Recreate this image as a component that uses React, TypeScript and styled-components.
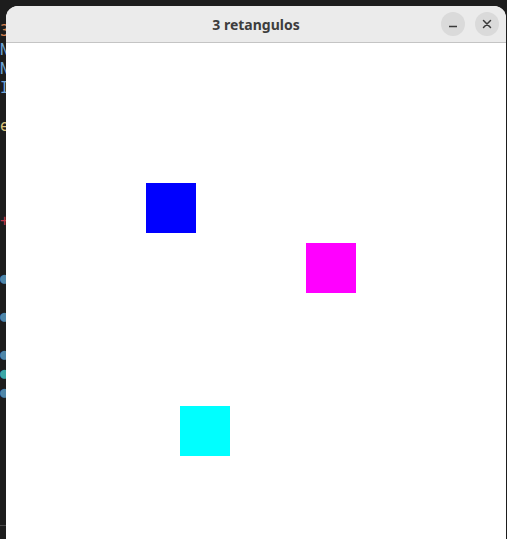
import React from "react";
import styled, { createGlobalStyle } from "styled-components";

const Global = createGlobalStyle`
  html, body { margin: 0; padding: 0; background: #1d1d1d; overflow: hidden; }
  #root { width: 507px; height: 539px; }
`;

const Desktop = styled.div`
  display: flex;
  width: 507px;
  height: 539px;
  background: #1d1d1d;
`;

const Terminal = styled.div`
  width: 6px;
  flex: none;
  overflow: hidden;
  display: flex;
  flex-direction: column;
  padding-top: 22px;
  font-family: "DejaVu Sans Mono", monospace;
  font-size: 15px;
  line-height: 19px;
  position: relative;
`;

const TermLine = styled.div<{ $color: string }>`
  height: 19px;
  display: flex;
  justify-content: flex-end;
  white-space: pre;
  color: ${(p) => p.$color};
  margin-right: -3px;
`;

const TermRule = styled.div`
  margin-top: auto;
  margin-bottom: 13px;
  height: 1px;
  background: #4a4a4a;
`;

const Window = styled.div`
  margin-top: 6px;
  width: 500px;
  flex: none;
  display: flex;
  flex-direction: column;
  background: #ffffff;
  border-radius: 12px 12px 0 0;
  overflow: hidden;
`;

const TitleBar = styled.div`
  height: 36px;
  flex: none;
  background: #ebebeb;
  border-bottom: 1px solid #c4c4c4;
  display: grid;
  grid-template-columns: 1fr auto 1fr;
  align-items: center;
`;

const Title = styled.div`
  grid-column: 2;
  font-family: "Noto Sans", "DejaVu Sans", sans-serif;
  font-weight: 700;
  font-size: 14px;
  color: #3d3d3d;
  padding-top: 1px;
`;

const Controls = styled.div`
  grid-column: 3;
  justify-self: end;
  display: flex;
  gap: 10px;
  padding-right: 7px;
`;

const CtrlButton = styled.div`
  width: 24px;
  height: 24px;
  border-radius: 50%;
  background: #dadada;
  display: flex;
  align-items: center;
  justify-content: center;
  color: #3a3a3a;
`;

const Canvas = styled.div`
  flex: 1;
  position: relative;
  background: #ffffff;
`;

const Rect = styled.div<{ $x: number; $y: number; $color: string }>`
  position: absolute;
  left: ${(p) => p.$x}px;
  top: ${(p) => p.$y}px;
  width: 50px;
  height: 50px;
  background: ${(p) => p.$color};
`;

const RightEdge = styled.div`
  width: 1px;
  flex: none;
  background: #1d1d1d;
`;

const termLines: [string, string][] = [
  ["3", "#d7804f"],
  ["N", "#6fa3d6"],
  ["N", "#6fa3d6"],
  ["I", "#6fa3d6"],
  [" ", "#cccccc"],
  ["e", "#d9c27a"],
  [" ", "#cccccc"],
  [" ", "#cccccc"],
  [" ", "#cccccc"],
  [" ", "#cccccc"],
  ["+", "#c0394a"],
  [" ", "#cccccc"],
  [" ", "#cccccc"],
  ["●", "#4f86a8"],
  [" ", "#cccccc"],
  ["●", "#4f86a8"],
  [" ", "#cccccc"],
  ["●", "#4f86a8"],
  ["●", "#3aa6a6"],
  ["●", "#4f86a8"],
];

export default function App() {
  return (
    <>
      <Global />
      <Desktop>
        <Terminal>
          {termLines.map(([t, c], i) => (
            <TermLine key={i} $color={c}>
              {t}
            </TermLine>
          ))}
          <TermRule />
        </Terminal>
        <Window>
          <TitleBar>
            <Title>3 retangulos</Title>
            <Controls>
              <CtrlButton>
                <svg width="10" height="10" viewBox="0 0 10 10">
                  <line x1="1" y1="7.5" x2="9" y2="7.5" stroke="currentColor" strokeWidth="1.3" />
                </svg>
              </CtrlButton>
              <CtrlButton>
                <svg width="10" height="10" viewBox="0 0 10 10">
                  <path d="M1.5 1.5 L8.5 8.5 M8.5 1.5 L1.5 8.5" stroke="currentColor" strokeWidth="1.5" strokeLinecap="round" />
                </svg>
              </CtrlButton>
            </Controls>
          </TitleBar>
          <Canvas>
            <Rect $x={140} $y={140} $color="#0000ff" />
            <Rect $x={300} $y={200} $color="#ff00ff" />
            <Rect $x={174} $y={363} $color="#00ffff" />
          </Canvas>
        </Window>
        <RightEdge />
      </Desktop>
    </>
  );
}
